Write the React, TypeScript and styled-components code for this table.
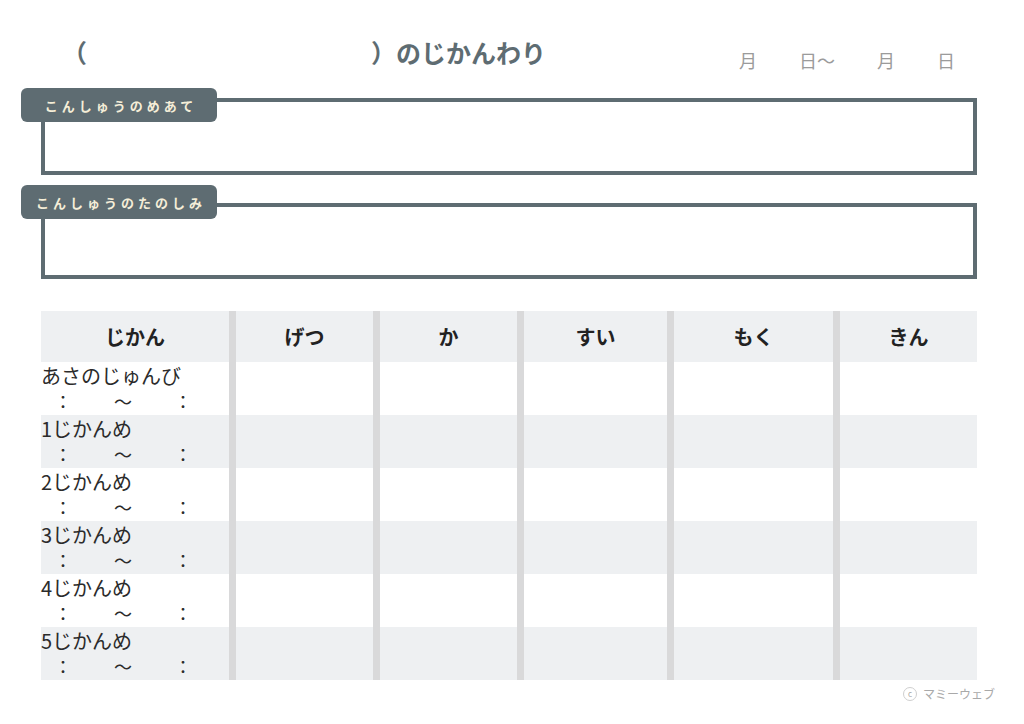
import styled, { createGlobalStyle } from 'styled-components'

const GlobalStyle = createGlobalStyle`
  html, body {
    margin: 0;
    padding: 0;
    background: #ffffff;
  }
  body {
    font-family: "Noto Sans CJK JP", "Noto Sans", sans-serif;
    color: #2b2b2b;
  }
`

const SLATE = '#5e6c72'
const ROW_GRAY = '#eef0f2'
const RULE_GRAY = '#d9d9da'

const Page = styled.div`
  width: 1024px;
  height: 724px;
  box-sizing: border-box;
  padding: 36px 0 0 41px;
  overflow: hidden;
`

const Header = styled.header`
  display: flex;
  justify-content: space-between;
  align-items: flex-start;
  height: 32px;
  padding-right: 69px;
`

const Title = styled.h1`
  display: flex;
  margin: 0 0 0 21px;
  font-size: 25px;
  line-height: 32px;
  font-weight: 700;
  color: ${SLATE};
`

const TitleBlank = styled.span`
  width: 284px;
`

const DateLine = styled.div`
  display: flex;
  gap: 42px;
  margin-top: 12px;
  font-size: 18px;
  line-height: 24px;
  font-weight: 400;
  color: #9b9b9b;
`

const NoteBox = styled.section<{ $top: number; $height: number }>`
  position: relative;
  width: 936px;
  height: ${p => p.$height}px;
  box-sizing: border-box;
  margin-top: ${p => p.$top}px;
  border: 4px solid ${SLATE};
`

const Tag = styled.div<{ $tagTop: number }>`
  position: absolute;
  left: -24px;
  top: ${p => p.$tagTop}px;
  width: 196px;
  height: 34px;
  border-radius: 6px;
  background: ${SLATE};
  color: #f5eed8;
  font-size: 13px;
  font-weight: 700;
  letter-spacing: 4px;
  display: flex;
  align-items: center;
  justify-content: center;
  padding-left: 4px;
  box-sizing: border-box;
`

const Table = styled.div`
  width: 936px;
  margin-top: 32px;
`

const Row = styled.div<{ $head?: boolean; $shade?: boolean }>`
  display: grid;
  grid-template-columns: 188px 144px 144px 150px 166px 144px;
  height: ${p => (p.$head ? 51 : 53)}px;
  background: ${p => (p.$shade ? ROW_GRAY : '#ffffff')};
`

const HeadCell = styled.div<{ $rule?: boolean }>`
  display: flex;
  align-items: center;
  justify-content: center;
  border-left: ${p => (p.$rule ? `7px solid ${RULE_GRAY}` : 'none')};
  font-size: 20px;
  font-weight: 700;
  color: #222;
`

const BodyCell = styled.div`
  border-left: 7px solid ${RULE_GRAY};
`

const LabelCell = styled.div`
  padding-top: 1px;
  font-size: 20px;
  line-height: 26px;
  color: #2b2b2b;
`

const TimeLine = styled.div`
  display: flex;
  gap: 42px;
  padding-left: 13px;
  font-size: 18px;
  line-height: 24px;
`

const Footer = styled.div`
  display: flex;
  justify-content: flex-end;
  align-items: center;
  gap: 6px;
  margin-top: 7px;
  padding-right: 29px;
  font-size: 12px;
  line-height: 14px;
  color: #a9a9a9;
`

const CopyMark = styled.span`
  display: inline-flex;
  align-items: center;
  justify-content: center;
  width: 12px;
  height: 12px;
  border: 1px solid #cfcfcf;
  border-radius: 50%;
  font-size: 8px;
  line-height: 1;
  color: #a9a9a9;
`

const days = ['げつ', 'か', 'すい', 'もく', 'きん']
const periods = ['あさのじゅんび', '1じかんめ', '2じかんめ', '3じかんめ', '4じかんめ', '5じかんめ']

export default function App() {
  return (
    <>
      <GlobalStyle />
      <Page>
        <Header>
          <Title>
            <span>（</span>
            <TitleBlank />
            <span>）のじかんわり</span>
          </Title>
          <DateLine>
            <span>月</span>
            <span>日～</span>
            <span>月</span>
            <span>日</span>
          </DateLine>
        </Header>

        <NoteBox $top={30} $height={77}>
          <Tag $tagTop={-14}>こんしゅうのめあて</Tag>
        </NoteBox>
        <NoteBox $top={28} $height={76}>
          <Tag $tagTop={-22}>こんしゅうのたのしみ</Tag>
        </NoteBox>

        <Table>
          <Row $head $shade>
            <HeadCell>じかん</HeadCell>
            {days.map(d => (
              <HeadCell key={d} $rule>
                {d}
              </HeadCell>
            ))}
          </Row>
          {periods.map((p, i) => (
            <Row key={p} $shade={i % 2 === 1}>
              <LabelCell>
                <div>{p}</div>
                <TimeLine>
                  <span>：</span>
                  <span>～</span>
                  <span>：</span>
                </TimeLine>
              </LabelCell>
              {days.map(d => (
                <BodyCell key={d} />
              ))}
            </Row>
          ))}
        </Table>

        <Footer>
          <CopyMark>c</CopyMark>
          <span>マミーウェブ</span>
        </Footer>
      </Page>
    </>
  )
}
